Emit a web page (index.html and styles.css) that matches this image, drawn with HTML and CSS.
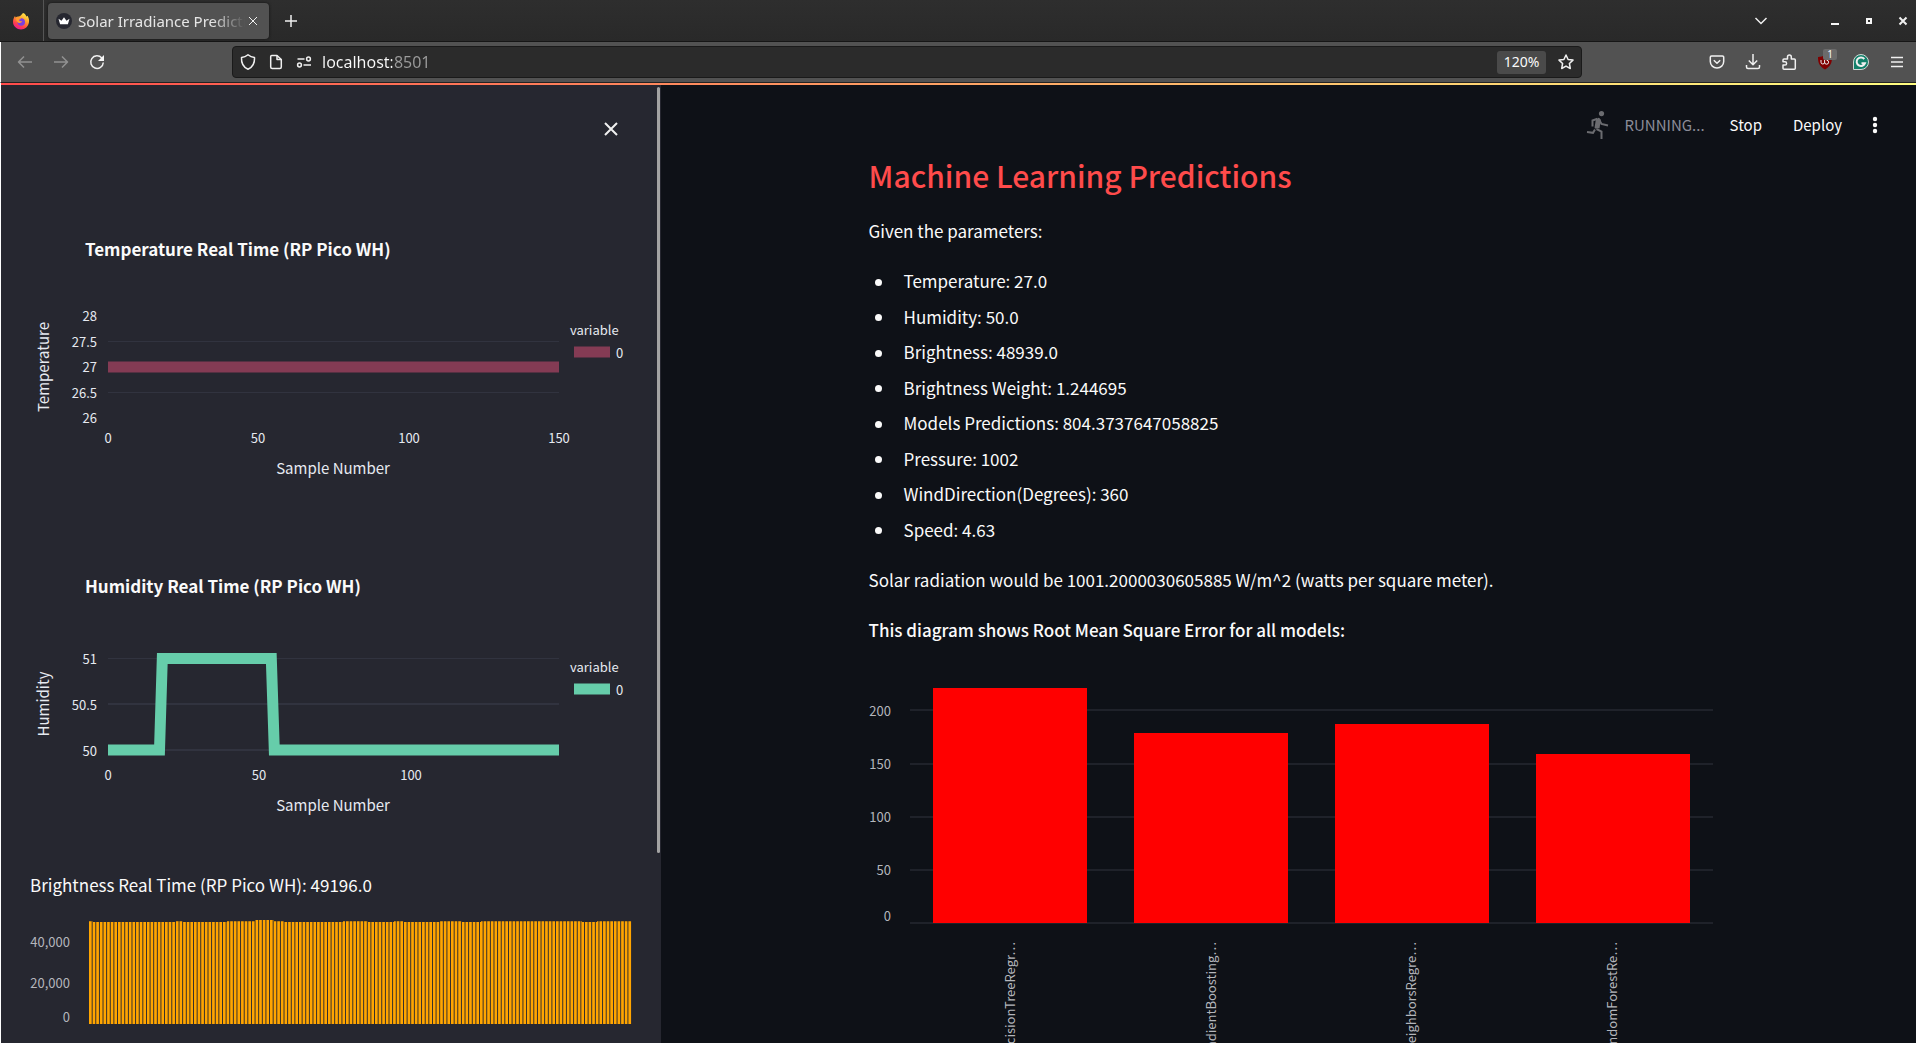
FILE: index.html
```html
<!DOCTYPE html>
<html lang="en">
<head>
<meta charset="utf-8">
<meta name="viewport" content="width=device-width, initial-scale=1">
<title>Solar Irradiance Prediction</title>
<link rel="stylesheet" href="styles.css">
</head>
<body>
<header class="browser">
  <div class="tabstrip">
    <button class="firefox-view" aria-label="Firefox View">
      <svg width="18" height="18" viewBox="0 0 18 18">
        <defs>
          <linearGradient id="flame" x1="0.8" y1="0" x2="0.3" y2="1">
            <stop offset="0" stop-color="#fff14a"/><stop offset="0.4" stop-color="#ffa02e"/><stop offset="0.75" stop-color="#ff3f4b"/><stop offset="1" stop-color="#e9159b"/>
          </linearGradient>
        </defs>
        <path fill="url(#flame)" d="M11 1c2 .6 3 2 3.300 3.500 1-.2 1.200-.8 1.200-.8C17 6 17.200 8 17 10c-.5 4.500-4 7.500-8 7.500S1 14.300 1 10c0-2.500.8-4.500 2-6l.6 1.500C4.500 4.800 5.500 4.500 6.500 4.600 8 4.200 9.500 3 11 1z"/>
        <circle cx="9.200" cy="10" r="3.800" fill="#7a3fe0"/>
        <path fill="#ff9a2c" d="M4.500 5.200c1.500-.4 3.500.2 4.700 1.800-1.700 0-2.400.8-2 1.600.6 1 2 .5 3 .3-.5 1.800-2.500 2.600-4.300 1.500C4.200 9.300 3.600 7 4.500 5.200z"/>
      </svg>
    </button>
    <div class="tab">
      <svg class="favicon" width="16" height="16" viewBox="0 0 16 16">
        <circle cx="8" cy="8" r="8" fill="#262730"/>
        <path fill="#fff" d="M2.500 5.800 5.500 7.700 8 4.200l2.500 3.500 3-1.900-1.600 5.400H4.100z"/>
      </svg>
      <span class="tab-title">Solar Irradiance Prediction</span>
      <button class="tab-close" aria-label="Close tab">
        <svg width="10" height="10" viewBox="0 0 10 10"><path d="M1 1l8 8M9 1l-8 8"/></svg>
      </button>
    </div>
    <button class="new-tab" aria-label="New tab">
      <svg width="14" height="14" viewBox="0 0 14 14"><path class="mid" d="M7 1v12M1 7h12"/></svg>
    </button>
    <div class="window-controls">
      <button class="list-tabs" aria-label="List all tabs"><svg width="14" height="10" viewBox="0 0 14 10"><path d="M1.500 2 7 7.500 12.500 2"/></svg></button>
      <button aria-label="Minimize"><svg width="10" height="10" viewBox="0 0 10 10"><path class="solid" d="M1 7h8v2H1z"/></svg></button>
      <button aria-label="Restore"><svg width="10" height="10" viewBox="0 0 10 10"><path class="solid" fill-rule="evenodd" d="M2 2h6v6H2zM4 4v2h2V4z"/></svg></button>
      <button aria-label="Close window"><svg width="10" height="10" viewBox="0 0 10 10"><path class="heavy" d="M1.500 1.500l7 7M8.500 1.500l-7 7"/></svg></button>
    </div>
  </div>

  <div class="toolbar">
    <div class="nav">
      <button class="dim" aria-label="Back"><svg width="16" height="16" viewBox="0 0 16 16"><path class="mid" d="M15 8H2M7 2.500 1.500 8 7 13.500"/></svg></button>
      <button class="dim" aria-label="Forward"><svg width="16" height="16" viewBox="0 0 16 16"><path class="mid" d="M1 8h13M9 2.500 14.500 8 9 13.500"/></svg></button>
      <button aria-label="Reload"><svg width="16" height="16" viewBox="0 0 16 16"><path class="mid" d="M12.800 4A6.300 6.300 0 1 0 14.300 8.500"/><path class="solid" d="M15 1v6H9z"/></svg></button>
    </div>
    <div class="urlbar">
      <button aria-label="Tracking protection"><svg width="16" height="16" viewBox="0 0 16 16"><path class="mid" d="M8 .8c2 1.700 4.200 2.500 6.500 2.700C14.800 9 12 13.500 8 15.200 4 13.500 1.200 9 1.500 3.500 3.800 3.300 6 2.500 8 .8z"/></svg></button>
      <button aria-label="Site information"><svg width="16" height="16" viewBox="0 0 16 16"><path class="mid" d="M3.700 1.500H9L13.300 5.500v7.500a1.500 1.500 0 0 1-1.500 1.500H4.200a1.500 1.500 0 0 1-1.500-1.500V2.500a1 1 0 0 1 1-1z"/><path class="mid" d="M9 1.500V5.500h4.300"/></svg></button>
      <button aria-label="Permissions"><svg width="16" height="16" viewBox="0 0 16 16"><path class="mid" d="M1.500 5h7M7.500 11H15"/><circle class="mid" cx="12.500" cy="5" r="1.900"/><circle class="mid" cx="3.500" cy="11" r="1.900"/></svg></button>
      <input class="address" type="text" aria-label="Address" value="localhost:8501">
      <button class="zoom-level">120%</button>
      <button aria-label="Bookmark this page"><svg width="16" height="16" viewBox="0 0 16 16"><path class="mid" d="M8 1l2.100 4.500 4.900.6-3.600 3.400.9 5L8 12.100l-4.300 2.400.9-5L1 6.100l4.900-.6z"/></svg></button>
    </div>
    <div class="extensions">
      <button aria-label="Pocket"><svg width="16" height="16" viewBox="0 0 16 16"><path class="mid" d="M2.500 2h11a1.200 1.200 0 0 1 1.200 1.200V7.500a6.700 6.500 0 0 1-13.400 0V3.200A1.200 1.200 0 0 1 2.500 2z"/><path class="mid" d="M4.800 6.300 8 9.300l3.200-3"/></svg></button>
      <button aria-label="Downloads"><svg width="16" height="16" viewBox="0 0 16 16"><path class="mid" d="M8 0v10.500M3.800 6.500 8 10.700l4.200-4.200M1.500 11v2A1.500 1.500 0 0 0 3 14.500h10a1.500 1.500 0 0 0 1.500-1.500v-2"/></svg></button>
      <button aria-label="Extensions"><svg width="16" height="16" viewBox="0 0 16 16"><path class="mid" d="M6.500 5V3a1.900 1.900 0 0 1 3.800 0v2h3a1 1 0 0 1 1 1v8.200a1 1 0 0 1-1 1H3a1 1 0 0 1-1-1v-3.200h2a1.500 1.500 0 0 0 0-3.200H2V6a1 1 0 0 1 1-1z"/></svg></button>
      <button class="blocker" aria-label="uBlock Origin">
        <svg width="16" height="16" viewBox="0 0 16 16"><path class="shield" d="M8 1c2 1.300 4 2 7 2 0 5.500-1 9-7 12.500C2 12 1 8.500 1 3c3 0 5-.7 7-2z"/><path d="M4 6v2.200a1.800 1.800 0 0 0 3.600 0V6M7.600 8.200a2 2 0 1 0 2-2"/></svg>
        <span class="count">1</span>
      </button>
      <button aria-label="Grammarly"><svg width="16" height="16" viewBox="0 0 16 16"><path fill="#12806a" stroke="#cfd8d5" d="M.5 15.500V8A7.500 7.500 0 1 1 8 15.500z"/><path class="heavy" d="M11.300 5A4.300 4.300 0 1 0 12 9.200H8.500"/></svg></button>
      <button aria-label="Menu"><svg width="16" height="16" viewBox="0 0 16 16"><path class="mid" d="M2 3.500h12M2 8h12M2 12.500h12"/></svg></button>
    </div>
  </div>
</header>

<div class="app">
  <aside class="sidebar">
    <button class="sidebar-close" aria-label="Close sidebar"><svg width="24" height="24" viewBox="0 0 24 24"><path class="heavy" d="M6 6l12 12M18 6 6 18"/></svg></button>

    <svg class="plot" viewBox="30 200 603 321" width="603" height="321" role="img" aria-label="Temperature chart">
      <text class="plot-title" x="85" y="256">Temperature Real Time (RP Pico WH)</text>
      <path class="grid" d="M108 341.500h451M108 392.500h451"/>
      <path class="series temperature" d="M108 367h451"/>
      <g class="tick end"><text x="97" y="321">28</text><text x="97" y="347">27.5</text><text x="97" y="372">27</text><text x="97" y="398">26.5</text><text x="97" y="423">26</text></g>
      <g class="tick middle"><text x="108" y="443">0</text><text x="258" y="443">50</text><text x="409" y="443">100</text><text x="559" y="443">150</text></g>
      <text class="axis-title" x="333" y="474">Sample Number</text>
      <text class="axis-title" transform="translate(49 367) rotate(-90)">Temperature</text>
      <text class="legend" x="570" y="335">variable</text>
      <path class="series temperature" d="M574 352h36"/>
      <text class="tick" x="616" y="358">0</text>
    </svg>

    <svg class="plot" viewBox="30 537 603 321" width="603" height="321" role="img" aria-label="Humidity chart">
      <text class="plot-title" x="85" y="593">Humidity Real Time (RP Pico WH)</text>
      <path class="grid" d="M108 658.500h451"/><path class="grid wide" d="M108 704h451M108 750h451"/>
      <path class="series humidity" d="M108 750H159.500L162.300 658.500H271.300L274.300 750H559"/>
      <g class="tick end"><text x="97" y="664">51</text><text x="97" y="710">50.5</text><text x="97" y="756">50</text></g>
      <g class="tick middle"><text x="108" y="780">0</text><text x="259" y="780">50</text><text x="411" y="780">100</text></g>
      <text class="axis-title" x="333" y="811">Sample Number</text>
      <text class="axis-title" transform="translate(49 704) rotate(-90)">Humidity</text>
      <text class="legend" x="570" y="672">variable</text>
      <path class="series humidity" d="M574 689h36"/>
      <text class="tick" x="616" y="695">0</text>
    </svg>

    <p class="reading">Brightness Real Time (RP Pico WH): 49196.0</p>
    <svg class="plot" viewBox="30 912 603 131" width="603" height="131" role="img" aria-label="Brightness chart">
      <defs><clipPath id="levels"><path d="M89 1024V921.300H93V922H176V921.300H183V922H227V921.300H255V920H274V921.300H284V922H343V921.300H368V922H394V921.300H404V922H440V921.300H462V922H481V921.300H582V922H597V921.300H633V1024z"/></clipPath></defs>
      <path class="brightness" clip-path="url(#levels)" d="M89 972H632"/>
      <g class="vega end"><text x="70" y="947">40,000</text><text x="70" y="988">20,000</text><text x="70" y="1022">0</text></g>
    </svg>
    <div class="scroll-thumb"></div>
  </aside>

  <main class="main">
    <div class="app-header">
      <svg class="runner" width="22" height="28" viewBox="0 0 22 28">
        <circle cx="14.500" cy="2.600" r="2.600"/>
        <path d="M12 7 8.500 17.500M9.500 18l5 2.500V28M12 8.500 14.500 13l6.500 1.500M10.500 7.800 5.500 9.500v6M8 18.500l-2 3.300-6-.8"/>
        <path class="torso" d="M11.500 8 10 17"/>
      </svg>
      <span class="status">RUNNING...</span>
      <button class="stop">Stop</button>
      <button class="deploy">Deploy</button>
      <button class="more" aria-label="Main menu"><svg width="6" height="18" viewBox="0 0 6 18"><circle cx="3" cy="3" r="2.200"/><circle cx="3" cy="9" r="2.200"/><circle cx="3" cy="15" r="2.200"/></svg></button>
    </div>
    <article class="content">
      <h2>Machine Learning Predictions</h2>
      <p>Given the parameters:</p>
      <ul>
        <li>Temperature: 27.0</li>
        <li>Humidity: 50.0</li>
        <li>Brightness: 48939.0</li>
        <li>Brightness Weight: 1.244695</li>
        <li>Models Predictions: 804.3737647058825</li>
        <li>Pressure: 1002</li>
        <li>WindDirection(Degrees): 360</li>
        <li>Speed: 4.63</li>
      </ul>
      <p>Solar radiation would be 1001.2000030605885 W/m^2 (watts per square meter).</p>
      <p class="caption">This diagram shows Root Mean Square Error for all models:</p>
      <svg class="rmse" viewBox="869 666 844 410" role="img" aria-label="Root mean square error by model">
        <path class="rule" d="M910 710h803M910 764h803M910 817h803M910 870h803M910 923h803"/>
        <path class="bar" d="M933 688h154v235H933zM1134 733h154v190h-154zM1335 724h154v199h-154zM1536 754h154v169h-154z"/>
        <g class="vega end"><text x="891" y="716">200</text><text x="891" y="769">150</text><text x="891" y="822">100</text><text x="891" y="875">50</text><text x="891" y="921">0</text></g>
        <g class="vega end">
          <text transform="translate(1015 942) rotate(-90)">DecisionTreeRegr…</text>
          <text transform="translate(1216 942) rotate(-90)">GradientBoosting…</text>
          <text transform="translate(1416 942) rotate(-90)">KNeighborsRegre…</text>
          <text transform="translate(1617 942) rotate(-90)">RandomForestRe…</text>
        </g>
      </svg>
    </article>
  </main>
</div>
</body>
</html>
```
FILE: styles.css
```css
* { box-sizing: border-box; }

body {
  margin: 0;
  height: 100vh;
  display: flex;
  flex-direction: column;
  overflow: hidden;
  background: #0e1117;
  color: #fafafa;
  font: 17px/30px "Noto Sans CJK SC", "Noto Sans", sans-serif;
}

button {
  display: flex;
  align-items: center;
  justify-content: center;
  padding: 0;
  border: 0;
  background: none;
  color: inherit;
  font: inherit;
}

button svg { fill: none; stroke: #f0f0f0; stroke-width: 1; overflow: visible; }
button svg .mid { stroke-width: 1.500; stroke-linejoin: round; }
button svg .heavy { stroke-width: 2; }
button svg .solid { fill: #f6f6f6; stroke: none; }
button svg .shield { fill: #800000; stroke: none; }

/* Browser frame */
.browser { flex: none; font: 15px/20px "Noto Sans", sans-serif; }

.tabstrip {
  display: flex;
  align-items: center;
  height: 42px;
  background: linear-gradient(#2e2e2e, #292929);
  border-bottom: 1px solid #161616;
}

.firefox-view { width: 44px; height: 41px; padding-right: 2px; border-right: 1px solid #555; }
.firefox-view svg { stroke: none; }

.tab {
  display: flex;
  align-items: center;
  width: 221px;
  height: 36px;
  margin: 0 12px 0 4px;
  padding: 0 8px;
  border-radius: 4px;
  background: #525252;
  box-shadow: 0 0 3px #111;
}

.favicon { flex: none; margin-right: 6px; }

.tab-title {
  flex: 1;
  overflow: hidden;
  white-space: nowrap;
  color: #e6e6e6;
  -webkit-mask-image: linear-gradient(90deg, #000 80%, transparent);
  mask-image: linear-gradient(90deg, #000 80%, transparent);
}

.tab-close { width: 16px; height: 16px; }
.new-tab { width: 20px; height: 20px; }
.window-controls { display: flex; margin-left: auto; }
.window-controls button { width: 34px; height: 20px; }
.window-controls button:last-child { width: 26px; margin-left: 4px; }
.window-controls .list-tabs { margin-right: 40px; }
.window-controls .list-tabs svg { stroke-width: 1.500; }

.toolbar {
  display: flex;
  align-items: center;
  height: 41px;
  padding-right: 11px;
  background: #525252;
  border-left: 1px solid #fff;
  border-bottom: 1px solid #232323;
}

.nav { display: flex; gap: 20px; width: 231px; padding-left: 16px; }
.dim { opacity: 0.4; }

.urlbar {
  flex: 1;
  display: flex;
  align-items: center;
  gap: 12px;
  height: 32px;
  padding: 0 7px;
  border: 1px solid #1a1a1a;
  border-radius: 4px;
  background: #2b2b2b;
}

/* The host part is bright, the port is dimmed. */
.address {
  flex: 1;
  min-width: 0;
  margin-left: -2px;
  padding: 0;
  border: 0;
  outline: 0;
  font: 16px/22px "Noto Sans", sans-serif;
  color: transparent;
  background: linear-gradient(90deg, #fafafa 70px, #9b9b9b 70px);
  -webkit-background-clip: text;
  background-clip: text;
}

.zoom-level { width: 49px; height: 23px; border-radius: 3px; background: #4a4a4a; font-size: 14px; }
.extensions { display: flex; gap: 20px; margin-left: 127px; }
.blocker { position: relative; }

.count {
  position: absolute;
  left: 6px;
  top: -5px;
  width: 14px;
  border-radius: 2px;
  background: #6b6b6b;
  font-size: 10px;
  line-height: 11px;
}

/* Application */
.app {
  position: relative;
  flex: 1;
  min-height: 0;
  display: flex;
  border-left: 1px solid #fff;
}

.app::before {
  content: "";
  position: absolute;
  inset: 0 0 auto 0;
  height: 2px;
  background: linear-gradient(90deg, #ff4b4b, #fffd80);
  z-index: 1;
}

.sidebar {
  position: relative;
  flex: none;
  width: 660px;
  padding: 34px 29px 0;
  overflow: hidden;
  background: #262730;
}

.sidebar-close { width: 24px; height: 24px; margin: 0 9px 59px auto; }
.plot { display: block; margin-bottom: 16px; }
.reading { margin: -4px 0 12px; }

.scroll-thumb {
  position: absolute;
  top: 4px;
  right: 1px;
  width: 3px;
  height: 766px;
  border-radius: 2px;
  background: #a3a3a3;
}

.plot-title { font-size: 17px; font-weight: 700; fill: #fafafa; }
.axis-title { font-size: 15px; text-anchor: middle; fill: #e6eaf1; }
.tick, .legend { font-size: 13px; fill: #e6eaf1; }
.vega { font-size: 13px; fill: #b4b6bc; }
.end { text-anchor: end; }
.middle { text-anchor: middle; }
.grid { stroke: #31333f; }
.grid.wide { stroke-width: 2; }
.series { fill: none; stroke-width: 11; stroke-linejoin: miter; }
.temperature { stroke: #843b54; }
.humidity { stroke: #66cdaa; }
.brightness { stroke: #ffa500; stroke-width: 106; stroke-dasharray: 2.700 0.920; }

.main { flex: 1; min-width: 0; padding-left: 4px; overflow: hidden; }

.app-header {
  display: flex;
  align-items: center;
  justify-content: flex-end;
  height: 56px;
  padding: 28px 38px 0 0;
  font-size: 15px;
  line-height: 28px;
}

.runner { fill: #6b6c70; stroke: none; overflow: visible; }
.runner path { fill: none; stroke: #6b6c70; stroke-width: 2; }
.runner .torso { stroke-width: 5; }
.status { margin: 0 25px 0 15px; color: #8b8c98; }
.stop { margin-right: 31px; }
.deploy { margin-right: 30px; }
.more svg { fill: #fafafa; stroke: none; }

.content { width: 100%; max-width: 844px; margin: 0 auto; }
.content h2 { margin: 16px 0 21px; font-size: 30px; line-height: 40px; font-weight: 500; color: #ff4b4b; }
.content p { margin: 0 0 20px; }
.content .caption { margin-bottom: 21px; font-weight: 500; }

.content ul {
  display: flex;
  flex-direction: column;
  justify-content: space-between;
  min-height: 279px;
  margin: 0 0 20px;
  padding: 0;
  list-style: none;
}

.content li { display: flex; align-items: center; }

.content li::before {
  content: "";
  width: 7px;
  height: 7px;
  margin: 2px 22px 0 6px;
  border-radius: 50%;
  background: #fafafa;
}

.rmse { display: block; width: 100%; }
.rule { stroke: #1f222a; stroke-width: 2; }
.bar { fill: #f00; }
```
